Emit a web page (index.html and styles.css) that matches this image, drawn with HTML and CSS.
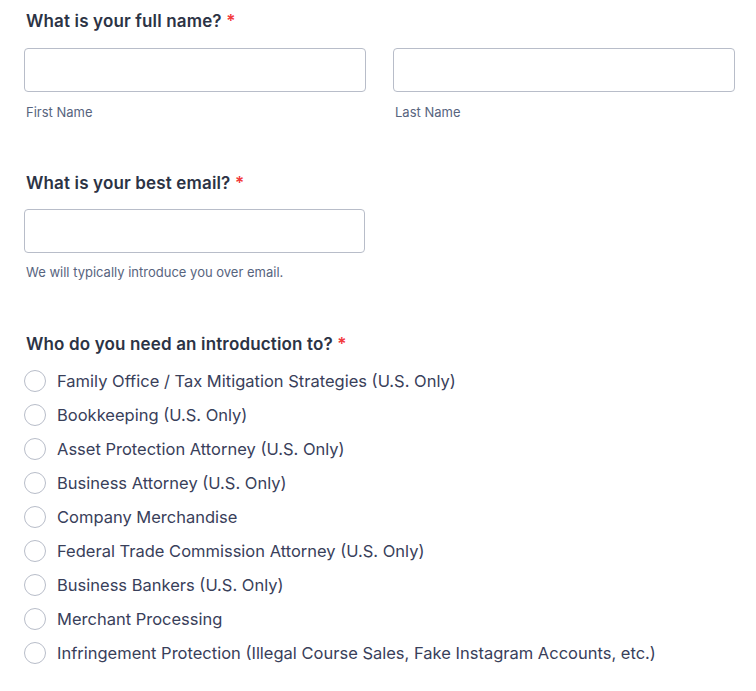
FILE: index.html
```html
<!DOCTYPE html>
<html>
<head>
<meta charset="utf-8">
<link rel="stylesheet" href="styles.css">
</head>
<body>
<form class="form">
  <section class="field field-name">
    <h2 class="q">What is your full name? <span class="req">*</span></h2>
    <div class="name-row">
      <div class="sub">
        <div class="input"></div>
        <div class="sublabel">First Name</div>
      </div>
      <div class="sub">
        <div class="input"></div>
        <div class="sublabel">Last Name</div>
      </div>
    </div>
  </section>
  <section class="field field-email">
    <h2 class="q">What is your best email? <span class="req">*</span></h2>
    <div class="input input-email"></div>
    <div class="helper">We will typically introduce you over email.</div>
  </section>
  <section class="field field-radio">
    <h2 class="q">Who do you need an introduction to? <span class="req">*</span></h2>
    <ul class="options">
      <li class="opt"><span class="radio"></span>Family Office / Tax Mitigation Strategies (U.S. Only)</li>
      <li class="opt"><span class="radio"></span>Bookkeeping (U.S. Only)</li>
      <li class="opt"><span class="radio"></span>Asset Protection Attorney (U.S. Only)</li>
      <li class="opt"><span class="radio"></span>Business Attorney (U.S. Only)</li>
      <li class="opt"><span class="radio"></span>Company Merchandise</li>
      <li class="opt"><span class="radio"></span>Federal Trade Commission Attorney (U.S. Only)</li>
      <li class="opt"><span class="radio"></span>Business Bankers (U.S. Only)</li>
      <li class="opt"><span class="radio"></span>Merchant Processing</li>
      <li class="opt"><span class="radio"></span>Infringement Protection (Illegal Course Sales, Fake Instagram Accounts, etc.)</li>
    </ul>
  </section>
</form>
</body>
</html>
```

FILE: styles.css
```css
html, body {
  margin: 0;
  padding: 0;
  background: #ffffff;
}
body {
  font-family: Inter, "Liberation Sans", sans-serif;
  color: #2c3345;
}
.form {
  padding: 9px 21px 0 24px;
  width: 711px;
}
.q {
  margin: 0;
  font-size: 17px;
  line-height: 24px;
  font-weight: 600;
  letter-spacing: 0.15px;
  color: #2c3345;
  padding-left: 2px;
}
.req {
  color: #f23a3c;
}
.name-row {
  display: flex;
  gap: 27px;
  margin-top: 15px;
}
.sub {
  flex: 1;
}
.input {
  box-sizing: border-box;
  height: 44px;
  border: 1px solid #b8bdc9;
  border-radius: 4px;
  background: #fff;
}
.sublabel {
  margin-top: 11px;
  padding-left: 2px;
  font-size: 13px;
  line-height: 18px;
  color: #57647e;
}
.field-email {
  margin-top: 50px;
}
.input-email {
  width: 341px;
  margin-top: 14px;
}
.helper {
  margin-top: 10px;
  padding-left: 2px;
  font-size: 13px;
  line-height: 18px;
  color: #57647e;
}
.field-radio {
  margin-top: 51px;
}
.options {
  list-style: none;
  margin: 8px 0 0;
  padding: 0;
}
.opt {
  display: flex;
  align-items: center;
  height: 34px;
  font-size: 16.5px;
  color: #39405a;
}
.radio {
  box-sizing: border-box;
  width: 22px;
  height: 22px;
  border: 1px solid #b8bdc9;
  border-radius: 50%;
  margin-right: 11px;
  flex: none;
}
```
